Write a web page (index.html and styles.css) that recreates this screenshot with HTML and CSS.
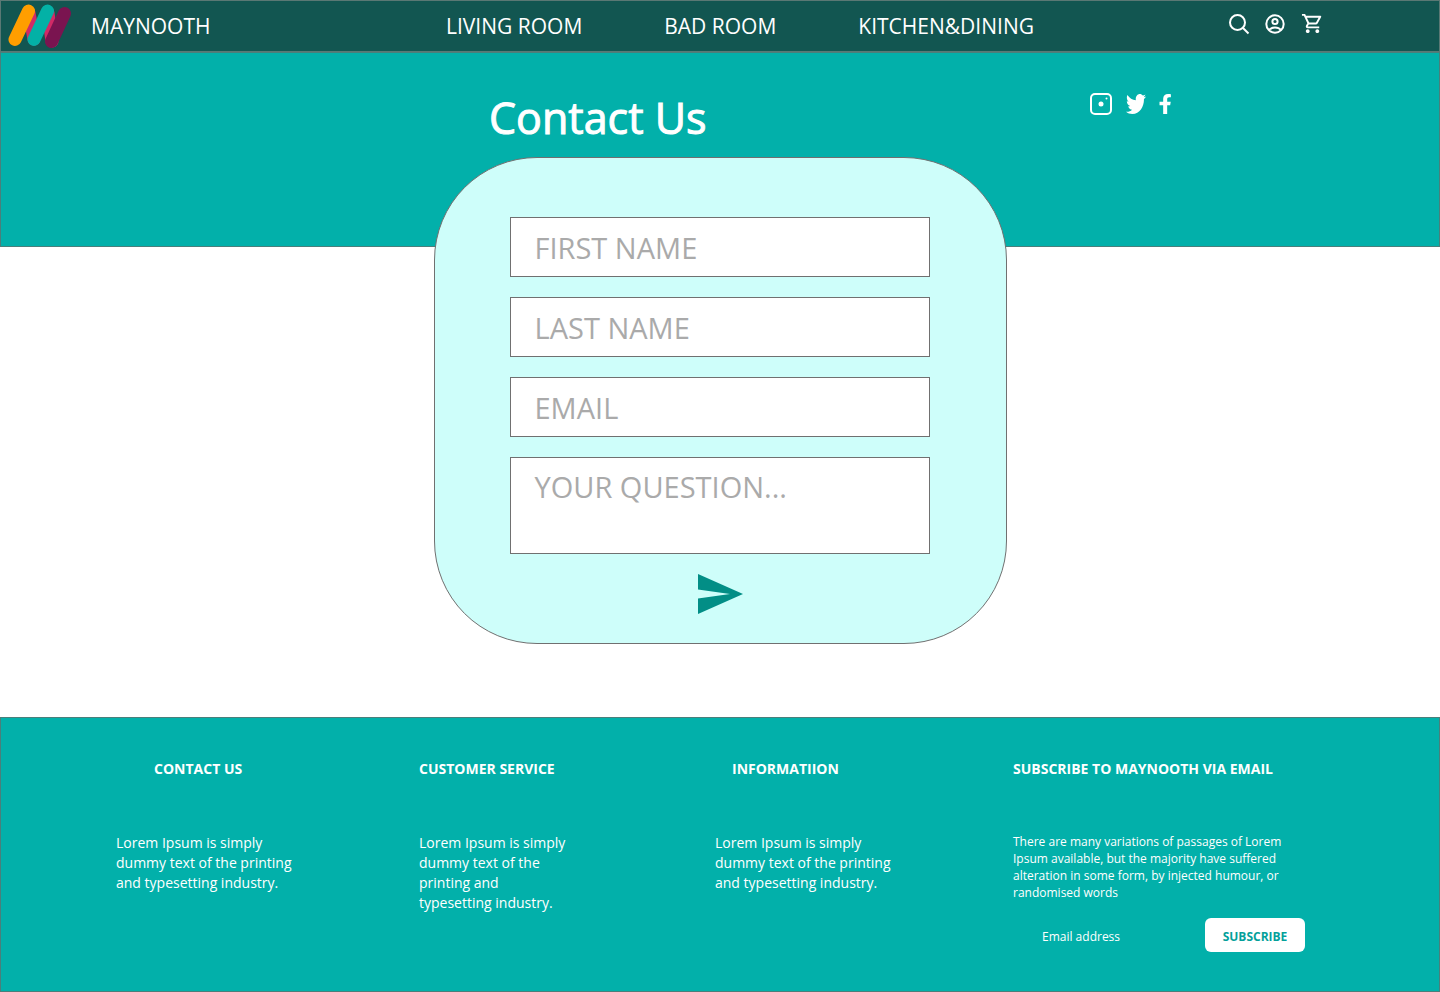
FILE: index.html
```html
<!DOCTYPE html>
<html lang="en">
<head>
<meta charset="utf-8">
<meta name="viewport" content="width=device-width, initial-scale=1">
<title>Maynooth - Contact Us</title>
<link rel="stylesheet" href="styles.css">
</head>
<body>
<header class="topbar">
  <a class="brand" href="#">
    <svg class="brand-logo" viewBox="0 0 64 46" aria-hidden="true">
      <g fill="none" stroke-width="13" stroke-linecap="round">
        <path d="M21 10L26 36M40 10L44 38" stroke="#d12a66"/>
        <path d="M20.500 8L7 36.500" stroke="#ff9e00"/>
        <path d="M39.500 8L26 36.500" stroke="#03b1a6"/>
        <path d="M56.500 10.500L43.500 38.500" stroke="#7a1450"/>
      </g>
    </svg>
    <span>MAYNOOTH</span>
  </a>
  <nav class="nav">
    <a href="#">LIVING ROOM</a>
    <a href="#">BAD ROOM</a>
    <a href="#">KITCHEN&amp;DINING</a>
  </nav>
  <div class="tools">
    <button type="button" aria-label="Search">
      <svg viewBox="0 0 24 24"><g fill="none" stroke="currentColor" stroke-width="2"><circle cx="10.500" cy="10.500" r="7.500"/><path d="M16 16l5.500 5.500"/></g></svg>
    </button>
    <button type="button" aria-label="Account">
      <svg viewBox="0 0 24 24"><g fill="none" stroke="currentColor" stroke-width="2"><circle cx="11" cy="12" r="8.700"/><circle cx="11" cy="9.500" r="2.600"/><path d="M4.800 18.200C6.500 16.300 8.600 15.500 11 15.500s4.500.8 6.200 2.700"/></g></svg>
    </button>
    <button type="button" aria-label="Cart">
      <svg viewBox="0 0 25 25"><path fill="currentColor" d="M15.550 13c.75 0 1.410-.41 1.750-1.030l3.580-6.490A.996.996 0 0 0 20.010 4H5.210l-.94-2H1v2h2l3.600 7.590-1.350 2.440C4.520 15.370 5.480 17 7 17h12v-2H7l1.100-2h7.450zM6.160 6h12.150l-2.760 5H8.530L6.160 6zM7 18c-1.100 0-1.990.9-1.990 2S5.900 22 7 22s2-.9 2-2-.9-2-2-2zm10 0c-1.100 0-1.990.9-1.990 2s.89 2 1.990 2 2-.9 2-2-.9-2-2-2z"/></svg>
    </button>
  </div>
</header>

<section class="hero">
  <h1>Contact Us</h1>
  <div class="social">
    <a href="#" aria-label="Instagram">
      <svg width="24" height="24" viewBox="0 0 24 24"><rect x="2" y="2" width="20" height="20" rx="4" fill="none" stroke="currentColor" stroke-width="2"/><circle cx="12" cy="12" r="2.500" fill="currentColor"/><circle cx="17.500" cy="6.500" r="1" fill="currentColor"/></svg>
    </a>
    <a href="#" aria-label="Twitter">
      <svg width="20" height="20" viewBox="0 48 512 416" preserveAspectRatio="none"><path fill="currentColor" d="M459.370 151.716c.325 4.548.325 9.097.325 13.645 0 138.720-105.583 298.558-298.558 298.558-59.452 0-114.680-17.219-161.137-47.106 8.447.974 16.568 1.299 25.340 1.299 49.055 0 94.213-16.568 130.274-44.832-46.132-.975-84.792-31.188-98.112-72.772 6.498.974 12.995 1.624 19.818 1.624 9.421 0 18.843-1.300 27.614-3.573-48.081-9.747-84.143-51.980-84.143-102.985v-1.299c13.969 7.797 30.214 12.670 47.431 13.319-28.264-18.843-46.781-51.005-46.781-87.391 0-19.492 5.197-37.360 14.294-52.954 51.655 63.675 129.300 105.258 216.365 109.807-1.624-7.797-2.599-15.918-2.599-24.040 0-57.828 46.782-104.934 104.934-104.934 30.213 0 57.502 12.670 76.670 33.137 23.715-4.548 46.456-13.320 66.599-25.340-7.798 24.366-24.366 44.833-46.132 57.827 21.117-2.273 41.584-8.122 60.426-16.243-14.292 20.791-32.161 39.308-52.628 54.253z"/></svg>
    </a>
    <a href="#" aria-label="Facebook">
      <svg width="12" height="20" viewBox="0 0 300 512" preserveAspectRatio="none"><path fill="currentColor" d="M279.140 288l14.220-92.660h-88.910v-60.130c0-25.350 12.420-50.060 52.240-50.060h40.420V6.260S260.430 0 225.360 0c-73.220 0-121.080 44.380-121.080 124.720v70.620H12.890V288h91.390v224h100.170V288z"/></svg>
    </a>
  </div>
</section>

<main>
  <form class="card">
    <input class="field" type="text" placeholder="FIRST NAME" aria-label="First name">
    <input class="field" type="text" placeholder="LAST NAME" aria-label="Last name">
    <input class="field" type="email" placeholder="EMAIL" aria-label="Email">
    <textarea class="field question" placeholder="YOUR QUESTION..." aria-label="Your question"></textarea>
    <button class="send" type="submit" aria-label="Send">
      <svg width="46" height="40" viewBox="0 0 46 40"><path fill="#028e86" d="M1 0L46 20L1 40V24.500L33 20L1 15.500Z"/></svg>
    </button>
  </form>
</main>

<footer class="footer">
  <section class="column contact">
    <h2>CONTACT US</h2>
    <p>Lorem Ipsum is simply dummy text of the printing and typesetting industry.</p>
  </section>
  <section class="column service">
    <h2>CUSTOMER SERVICE</h2>
    <p>Lorem Ipsum is simply dummy text of the printing and typesetting industry.</p>
  </section>
  <section class="column info">
    <h2>INFORMATIION</h2>
    <p>Lorem Ipsum is simply dummy text of the printing and typesetting industry.</p>
  </section>
  <section class="column newsletter">
    <h2>SUBSCRIBE TO MAYNOOTH VIA EMAIL</h2>
    <p>There are many variations of passages of Lorem Ipsum available, but the majority have suffered alteration in some form, by injected humour, or randomised words</p>
    <form class="subscribe">
      <input type="email" placeholder="Email address" aria-label="Email address">
      <button type="submit">SUBSCRIBE</button>
    </form>
  </section>
</footer>
</body>
</html>
```
FILE: styles.css
```css
* {
  box-sizing: border-box;
}

body {
  margin: 0;
  min-height: 100vh;
  display: flex;
  flex-direction: column;
  background: #fff;
  color: #fff;
  font-family: "Open Sans", "Noto Sans", sans-serif;
}

h1, h2, p {
  margin: 0;
}

a {
  color: inherit;
  text-decoration: none;
}

button {
  padding: 0;
  border: 0;
  background: none;
  color: inherit;
  font-family: inherit;
  cursor: pointer;
}

svg {
  display: block;
}

input, textarea {
  font-family: inherit;
}

.topbar {
  display: flex;
  align-items: center;
  height: 52px;
  padding-left: 7px;
  background: #125651;
  border: 1px solid #5a7874;
  font-size: 21px;
}

.brand {
  display: flex;
  align-items: center;
  gap: 19px;
  width: 438px;
}

.brand-logo {
  width: 64px;
  height: 46px;
}

.nav {
  display: flex;
  gap: 82px;
}

.tools {
  display: flex;
  gap: 13px;
  margin: 0 114px 4px auto;
}

.tools svg {
  width: 24px;
  height: 24px;
}

.hero {
  display: flex;
  justify-content: space-between;
  height: 195px;
  padding: 35px 268px 0 488px;
  background: #02b0aa;
  border: 1px solid #4a7f7b;
}

.hero h1 {
  font-size: 43px;
  line-height: 60px;
  font-weight: 400;
  -webkit-text-stroke: 1px currentColor;
}

.social {
  display: flex;
  align-items: center;
  gap: 13px;
  height: 32px;
}

main {
  flex: 1;
  padding-bottom: 73px;
}

.card {
  display: flex;
  flex-direction: column;
  gap: 20px;
  width: 100%;
  max-width: 573px;
  margin: -90px auto 0;
  padding: 59px 76px 29px 75px;
  background: #cefefa;
  border: 1px solid #707070;
  border-radius: 103px;
}

.field {
  display: block;
  width: 100%;
  height: 60px;
  padding: 0 24px;
  border: 1px solid #707070;
  border-radius: 0;
  background: #fff;
  color: #333;
  font-size: 29px;
}

.field::placeholder {
  color: #aaa;
  opacity: 1;
}

.question {
  height: 97px;
  padding-top: 9px;
  line-height: 40px;
  resize: none;
}

.send {
  align-self: center;
}

.footer {
  display: grid;
  grid-template-columns: 303fr 296fr 298fr 426fr;
  min-height: 275px;
  padding: 40px 0 38px 115px;
  background: #02b0aa;
  border: 1px solid #4a7f7b;
}

.column h2 {
  margin-bottom: 53px;
  font-size: 14px;
  line-height: 22px;
  font-weight: 700;
}

.column p {
  max-width: 184px;
  font-size: 14px;
  line-height: 20px;
}

.contact h2 {
  padding-left: 38px;
}

.service p {
  max-width: 150px;
}

.info h2 {
  padding-left: 17px;
}

.newsletter p {
  max-width: 292px;
  font-size: 12px;
  line-height: 17px;
}

.subscribe {
  display: flex;
  width: 292px;
  height: 34px;
  margin-top: 17px;
}

.subscribe input {
  flex: 1;
  min-width: 0;
  padding: 3px 0 0 29px;
  border: 0;
  background: none;
  color: #fff;
  font-size: 12px;
}

.subscribe input::placeholder {
  color: #fff;
  opacity: 1;
}

.subscribe button {
  width: 100px;
  padding-top: 3px;
  border-radius: 6px;
  background: #fff;
  color: #03a09a;
  font-size: 12px;
  font-weight: 700;
}
```
